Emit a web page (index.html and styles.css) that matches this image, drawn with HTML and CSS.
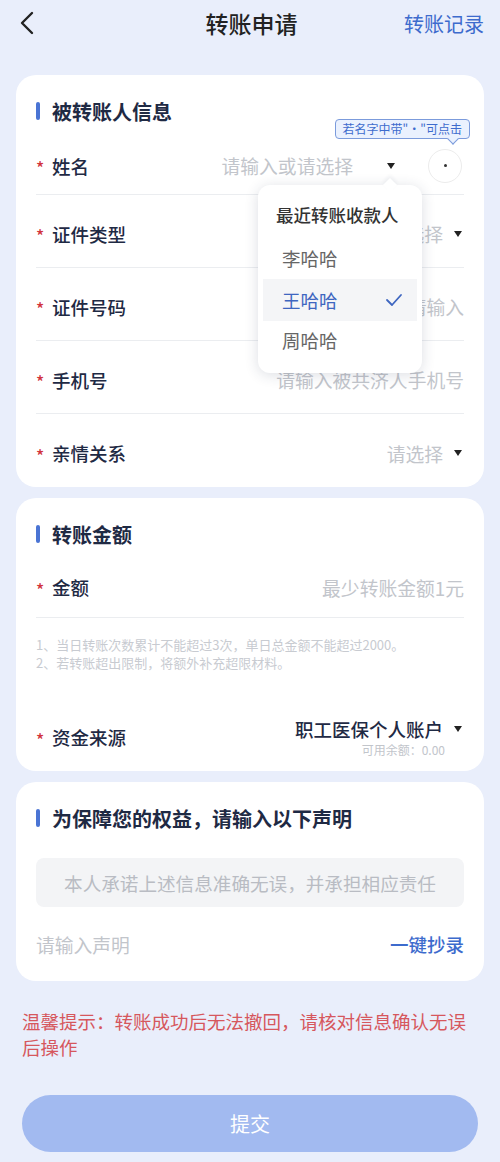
FILE: index.html
```html
<!DOCTYPE html>
<html lang="zh-CN">
<head>
  <meta charset="UTF-8" />
  <meta name="viewport" content="width=device-width, initial-scale=1.0"/>
  <title>转账申请</title>
  <link rel="stylesheet" href="styles.css">
</head>
<body>
  <header class="nav">
    <a class="nav-back" href="#">
      <svg width="16" height="24" viewBox="0 0 16 24"><polyline points="13,2 3,12 13,22" fill="none" stroke="#222" stroke-width="2.4" stroke-linecap="round" stroke-linejoin="round"/></svg>
    </a>
    <h1 class="nav-title">转账申请</h1>
    <a class="nav-link" href="#">转账记录</a>
  </header>

  <main class="page">
    <!-- 收款人信息 -->
    <section class="card">
      <h2 class="card-title">被转账人信息</h2>

      <div class="row row-name">
        <label class="row-label"><span class="star">*</span>姓名</label>
        <div class="row-value">
          <span class="placeholder">请输入或请选择</span>
          <span class="caret caret-wide"></span>
          <button class="dot-btn" type="button"><i></i></button>
        </div>
        <div class="tip">若名字中带"·"可点击</div>

        <div class="picker">
          <div class="picker-title">最近转账收款人</div>
          <div class="picker-item">李哈哈</div>
          <div class="picker-item active">王哈哈
            <svg width="18" height="14" viewBox="0 0 18 14"><polyline points="2,7 7,12 16,2" fill="none" stroke="#3e66c0" stroke-width="1.8" stroke-linecap="round" stroke-linejoin="round"/></svg>
          </div>
          <div class="picker-item">周哈哈</div>
        </div>
      </div>

      <div class="row">
        <label class="row-label"><span class="star">*</span>证件类型</label>
        <div class="row-value"><span class="placeholder">请选择</span><span class="caret"></span></div>
      </div>

      <div class="row">
        <label class="row-label"><span class="star">*</span>证件号码</label>
        <div class="row-value"><span class="placeholder">请输入</span></div>
      </div>

      <div class="row">
        <label class="row-label"><span class="star">*</span>手机号</label>
        <div class="row-value"><span class="placeholder">请输入被共济人手机号</span></div>
      </div>

      <div class="row">
        <label class="row-label"><span class="star">*</span>亲情关系</label>
        <div class="row-value"><span class="placeholder">请选择</span><span class="caret"></span></div>
      </div>
    </section>

    <!-- 金额 -->
    <section class="card">
      <h2 class="card-title">转账金额</h2>

      <div class="row row-amount">
        <label class="row-label"><span class="star">*</span>金额</label>
        <div class="row-value"><span class="placeholder">最少转账金额1元</span></div>
      </div>

      <div class="notes">
        <p>1、当日转账次数累计不能超过3次，单日总金额不能超过2000。</p>
        <p>2、若转账超出限制，将额外补充超限材料。</p>
      </div>

      <div class="row row-source">
        <label class="row-label"><span class="star">*</span>资金来源</label>
        <div class="source">
          <div class="source-main"><span class="value">职工医保个人账户</span><span class="caret"></span></div>
          <div class="source-sub">可用余额：0.00</div>
        </div>
      </div>
    </section>

    <!-- 声明 -->
    <section class="card">
      <h2 class="card-title">为保障您的权益，请输入以下声明</h2>
      <div class="statement">本人承诺上述信息准确无误，并承担相应责任</div>
      <div class="statement-input">
        <span class="placeholder">请输入声明</span>
        <a class="copy-link" href="#">一键抄录</a>
      </div>
    </section>

    <p class="warning">温馨提示：转账成功后无法撤回，请核对信息确认无误后操作</p>

    <button class="submit" type="button">提交</button>
  </main>
</body>
</html>
```

FILE: styles.css
```css
:root {
  --bg-color: #e9eefb;
  --text-color: #1f2a44;
  --blue: #3d6bcd;
  --muted: #c2c5cb;
  --line: #ebedf0;
  --red: #d1343c;
}

* {
  box-sizing: border-box;
}

body {
  margin: 0;
  background-color: var(--bg-color);
  color: var(--text-color);
  font-family: "Noto Sans CJK SC", "Noto Sans", sans-serif;
}

/* 顶部导航 */
.nav {
  display: grid;
  grid-template-columns: 1fr auto 1fr;
  align-items: center;
  height: 46px;
  padding: 0 16px 0 19px;
}

.nav-back {
  display: flex;
  align-items: center;
}

.nav-title {
  margin: 0;
  font-size: 23px;
  font-weight: 500;
  color: #222;
}

.nav-link {
  justify-self: end;
  color: var(--blue);
  font-size: 20px;
  text-decoration: none;
}

.page {
  padding: 29px 16px 9px;
}

.card {
  background-color: #fff;
  border-radius: 20px;
  padding: 22px 20px 0;
  margin-bottom: 11px;
}

.card-title {
  display: flex;
  align-items: center;
  margin: 0;
  height: 28px;
  font-size: 20px;
  font-weight: 700;
  color: var(--text-color);
}

.card-title::before {
  content: "";
  width: 4px;
  height: 18px;
  border-radius: 2px;
  background-color: #4a74d4;
  margin-right: 12px;
}

/* 表单行 */
.row {
  position: relative;
  display: flex;
  align-items: center;
  height: 73px;
  padding-top: 5px;
  border-bottom: 1px solid var(--line);
}

.card > .row:last-child {
  border-bottom: none;
}

.row-name {
  height: 70px;
  padding-top: 12px;
}

.row-amount {
  height: 70px;
  margin-top: 0;
  padding-top: 9px;
}

.row-label {
  display: flex;
  align-items: center;
  font-size: 18.5px;
  font-weight: 500;
  white-space: nowrap;
}

.star {
  color: var(--red);
  font-size: 17px;
  width: 16px;
  margin-top: 4px;
}

.row-value {
  margin-left: auto;
  display: flex;
  align-items: center;
}

.placeholder {
  color: var(--muted);
  font-size: 18.8px;
}

.caret {
  width: 0;
  height: 0;
  margin-left: 11px;
  margin-right: 2px;
  border-left: 4px solid transparent;
  border-right: 4px solid transparent;
  border-top: 6px solid #222;
}

.caret-wide {
  margin-left: 34px;
}

.dot-btn {
  width: 34px;
  height: 34px;
  margin-left: 31px;
  margin-right: 2px;
  border: 1px solid #ececec;
  border-radius: 50%;
  background: #fff;
  display: flex;
  align-items: center;
  justify-content: center;
  padding: 0;
}

.dot-btn i {
  width: 3px;
  height: 3px;
  border-radius: 50%;
  background-color: #333;
}

/* 提示气泡 */
.tip {
  position: absolute;
  top: -6px;
  right: -6px;
  height: 20px;
  padding: 0 7px;
  line-height: 18px;
  font-size: 12px;
  color: #3d6bcd;
  background-color: #eaf1fe;
  border: 1px solid #7b9bdc;
  border-radius: 4px;
  white-space: nowrap;
}

.tip::after {
  content: "";
  position: absolute;
  right: 12px;
  bottom: -5px;
  width: 7px;
  height: 7px;
  background-color: #eaf1fe;
  border-right: 1px solid #7b9bdc;
  border-bottom: 1px solid #7b9bdc;
  transform: rotate(45deg);
}

/* 最近收款人下拉 */
.picker {
  position: absolute;
  top: 60px;
  left: 222px;
  width: 164px;
  height: 188px;
  background-color: #fff;
  border-radius: 12px;
  box-shadow: 0 2px 14px rgba(40, 50, 80, 0.16);
  padding: 16px 5px 0;
  z-index: 2;
}

.picker::before {
  content: "";
  position: absolute;
  top: -5px;
  right: 27px;
  width: 10px;
  height: 10px;
  background-color: #fff;
  transform: rotate(45deg);
  box-shadow: -2px -2px 4px rgba(40, 50, 80, 0.06);
}

.picker-title {
  padding-left: 13px;
  font-size: 17.5px;
  font-weight: 500;
  color: #333;
  line-height: 28px;
  margin-bottom: 10px;
}

.picker-item {
  display: flex;
  align-items: center;
  justify-content: space-between;
  height: 42px;
  padding: 0 14px 0 19px;
  font-size: 18.5px;
  color: #666;
  margin-top: -2px;
}

.picker-item.active {
  background-color: #f4f5f7;
  color: #3e66c0;
  margin-top: 0;
}

/* 额度说明 */
.notes {
  padding: 18px 0 26px;
  color: #c8cbd1;
  font-size: 13px;
  line-height: 18px;
}

.notes p {
  margin: 0;
}

.source {
  margin-left: auto;
  display: flex;
  flex-direction: column;
  align-items: flex-end;
  margin-top: 1px;
}

.source-main {
  display: flex;
  align-items: center;
  line-height: 24px;
}

.value {
  font-size: 18.5px;
  font-weight: 500;
}

.source-sub {
  font-size: 12px;
  color: #c2c5cb;
  margin-right: 19px;
  line-height: 18px;
}

/* 声明 */
.statement {
  margin-top: 26px;
  height: 49px;
  border-radius: 8px;
  background-color: #f3f4f6;
  color: #b9bcc3;
  font-size: 18.6px;
  display: flex;
  align-items: center;
  justify-content: center;
}

.statement-input {
  display: flex;
  align-items: center;
  justify-content: space-between;
  height: 74px;
}

.copy-link {
  color: var(--blue);
  font-size: 18.5px;
  font-weight: 500;
  text-decoration: none;
}

.warning {
  margin: 27px 6px 0;
  color: #d6575d;
  font-size: 18.5px;
  line-height: 26px;
}

.submit {
  display: block;
  width: calc(100% - 12px);
  margin: 35px auto 0;
  height: 57px;
  border: none;
  border-radius: 29px;
  background-color: #a2baf0;
  color: #fff;
  font-family: inherit;
  font-size: 20px;
}
```
